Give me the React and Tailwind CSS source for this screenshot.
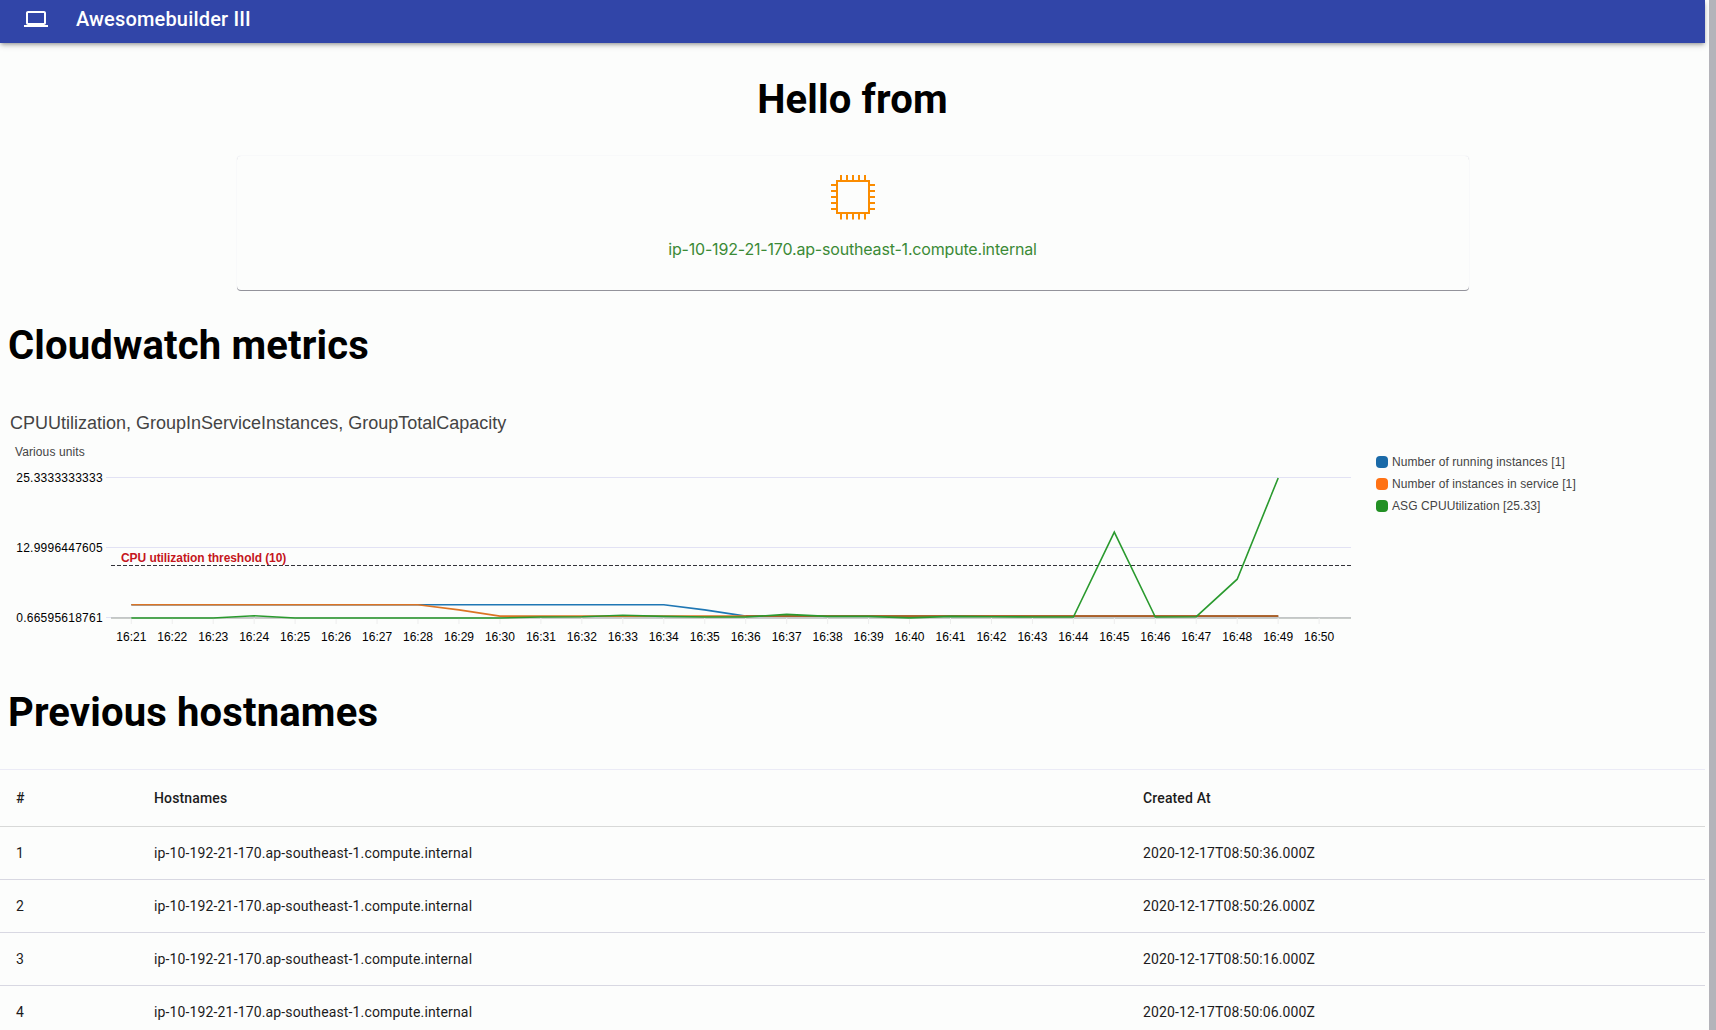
const TIMES = Array.from({ length: 30 }, (_, i) => `16:${21 + i}`);
const px = (i) => 131.3 + i * 40.96;
const py = (v) => 618 - (v - 0.66595618761) * 5.676 - 400;
const line = (vals) => vals.map((v, i) => `${px(i).toFixed(1)},${py(v).toFixed(1)}`).join(" ");

const RUNNING = TIMES.slice(0, 29).map((_, i) => (i <= 13 ? 3 : i === 14 ? 2.1 : 1));
const IN_SERVICE = TIMES.slice(0, 29).map((_, i) => (i <= 7 ? 3 : i === 8 ? 2.1 : 1));
const CPU = [
  0.67, 0.67, 0.67, 1.05, 0.67, 0.67, 0.67, 0.67, 0.67, 0.67, 0.85, 0.9, 1.15, 0.95, 0.85, 0.85, 1.3, 0.95, 0.95, 0.68,
  0.95, 0.9, 0.85, 0.85, 15.8, 0.85, 0.9, 7.5, 25.3333,
];

const LEGEND = [
  ["bg-[#1a6aa8]", "Number of running instances [1]"],
  ["bg-[#ff7214]", "Number of instances in service [1]"],
  ["bg-[#229024]", "ASG CPUUtilization [25.33]"],
];

const Y_LABELS = [
  [477.5, "25.3333333333"],
  [547.5, "12.9996447605"],
  [617.5, "0.66595618761"],
];

const ROWS = ["36", "26", "16", "06"];

function LaptopIcon() {
  return (
    <svg className="size-6" viewBox="0 0 24 24" fill="currentColor">
      <path d="M20 18c1.1 0 1.99-.9 1.99-2L22 6c0-1.1-.9-2-2-2H4c-1.1 0-2 .9-2 2v10c0 1.1.9 2 2 2H0v2h24v-2h-4zM4 6h16v10H4V6z" />
    </svg>
  );
}

function ChipIcon() {
  const pins = [10, 16, 22, 28, 34];
  return (
    <svg className="h-[45px] w-11" viewBox="0 0 44 45" fill="none" stroke="#fb8c00" strokeWidth="2">
      <rect x="6" y="6" width="32" height="32" />
      {pins.map((p) => (
        <path key={p} d={`M${p} 0V5M${p} 39V44.5M0 ${p}H5M39 ${p}H44`} />
      ))}
    </svg>
  );
}

function Chart() {
  return (
    <svg className="block h-[254px] w-[1360px] font-['Liberation_Sans',Arial,sans-serif] text-[12px]" viewBox="0 0 1360 254">
      <text x="10" y="29" fontSize="18" fill="#444">CPUUtilization, GroupInServiceInstances, GroupTotalCapacity</text>
      <text x="15" y="56" fill="#444" letterSpacing="0.1">Various units</text>
      {Y_LABELS.map(([y, label]) => (
        <g key={label}>
          <line x1="106" x2="1351" y1={y - 400} y2={y - 400} stroke="#e2e2f4" />
          <text x="102.8" y={y - 395.5} textAnchor="end" letterSpacing="0.24" fill="#000">{label}</text>
        </g>
      ))}
      <line x1="111" x2="1351" y1="218" y2="218" stroke="#b9bcb9" strokeWidth="1.5" />
      {TIMES.map((t, i) => (
        <g key={t}>
          <line x1={px(i)} x2={px(i)} y1="218" y2="224" stroke="#ededed" />
          <text x={px(i)} y="240.5" textAnchor="middle" fill="#000">{t}</text>
        </g>
      ))}
      <line x1="111" x2="1351" y1="165.5" y2="165.5" stroke="#33333a" strokeDasharray="4 2" shapeRendering="crispEdges" />
      <text x="121" y="162" fontWeight="bold" letterSpacing="-0.07" fill="#c5161c">CPU utilization threshold (10)</text>
      <g fill="none" strokeWidth="1.6">
        <polyline points={line(RUNNING)} stroke="#1f77b4" />
        <polyline points={line(IN_SERVICE)} stroke="#dc7424" />
        <polyline points={line(RUNNING.slice(0, 29).map(() => 1)).split(" ").slice(15).join(" ")} stroke="#a8602a" />
        <polyline points={line(CPU)} stroke="#2a9a2e" />
      </g>
    </svg>
  );
}

export default function App() {
  return (
    <div className="flex h-[1030px] w-full overflow-hidden bg-[#fcfdfc] font-['Roboto',sans-serif] text-black">
      <div className="flex w-[1705px] shrink-0 flex-col">
        <header className="flex h-[43px] shrink-0 items-start bg-[#3145a8] pt-[7px] pl-6 text-white shadow-[0_2px_4px_-1px_rgba(0,0,0,0.35),0_3px_6px_rgba(0,0,0,0.12)]">
          <LaptopIcon />
          <span className="ml-7 text-xl leading-6 font-medium tracking-[0.17px]">Awesomebuilder III</span>
        </header>
        <h1 className="mt-[33px] text-center text-[40px] leading-12 font-bold tracking-[0.15px]">Hello from</h1>
        <section className="mx-auto mt-8 flex h-[134px] w-[1232px] shrink-0 flex-col items-center rounded-[4px] pt-[19px] shadow-[0_1px_0_0_#93939b,0_0_1px_0_rgba(60,60,140,0.22)]">
          <ChipIcon />
          <p className="mt-[17px] font-['Inter',sans-serif] text-base leading-6 tracking-[-0.18px] text-[#3b8a36]">ip-10-192-21-170.ap-southeast-1.compute.internal</p>
        </section>
        <h1 className="mt-8 ml-2 text-[40px] leading-12 font-bold tracking-[0.15px]">Cloudwatch metrics</h1>
        <section className="mt-[30px] flex">
          <Chart />
          <ul className="mt-[51px] ml-4 font-['Liberation_Sans',Arial,sans-serif] text-xs leading-[22px] tracking-[0.09px] text-[#444]">
            {LEGEND.map(([color, label]) => (
              <li key={label} className="flex h-[22px] items-center gap-1">
                <span className={`size-3 rounded-[4px] ${color}`} />
                {label}
              </li>
            ))}
          </ul>
        </section>
        <h1 className="mt-[35px] ml-2 text-[40px] leading-12 font-bold tracking-[0.15px]">Previous hostnames</h1>
        <table className="mt-8 w-full table-fixed border-collapse text-left text-sm tracking-[0.14px] text-[#1c1c1c]">
          <colgroup>
            <col className="w-[138px]" />
            <col className="w-[989px]" />
            <col />
          </colgroup>
          <thead>
            <tr className="h-[57px] border-t border-b border-t-[#ebebf6] border-b-[#d8d9d8]">
              <th className="px-4 font-medium">#</th>
              <th className="px-4 font-medium">Hostnames</th>
              <th className="px-4 font-medium">Created At</th>
            </tr>
          </thead>
          <tbody>
            {ROWS.map((s, i) => (
              <tr key={s} className="h-[53px] border-b border-[#d8d8e2]">
                <td className="px-4">{i + 1}</td>
                <td className="px-4">ip-10-192-21-170.ap-southeast-1.compute.internal</td>
                <td className="px-4">{`2020-12-17T08:50:${s}.000Z`}</td>
              </tr>
            ))}
          </tbody>
        </table>
      </div>
      <div className="ml-1 w-[7px] shrink-0 bg-[#b4b4ba]" />
    </div>
  );
}
